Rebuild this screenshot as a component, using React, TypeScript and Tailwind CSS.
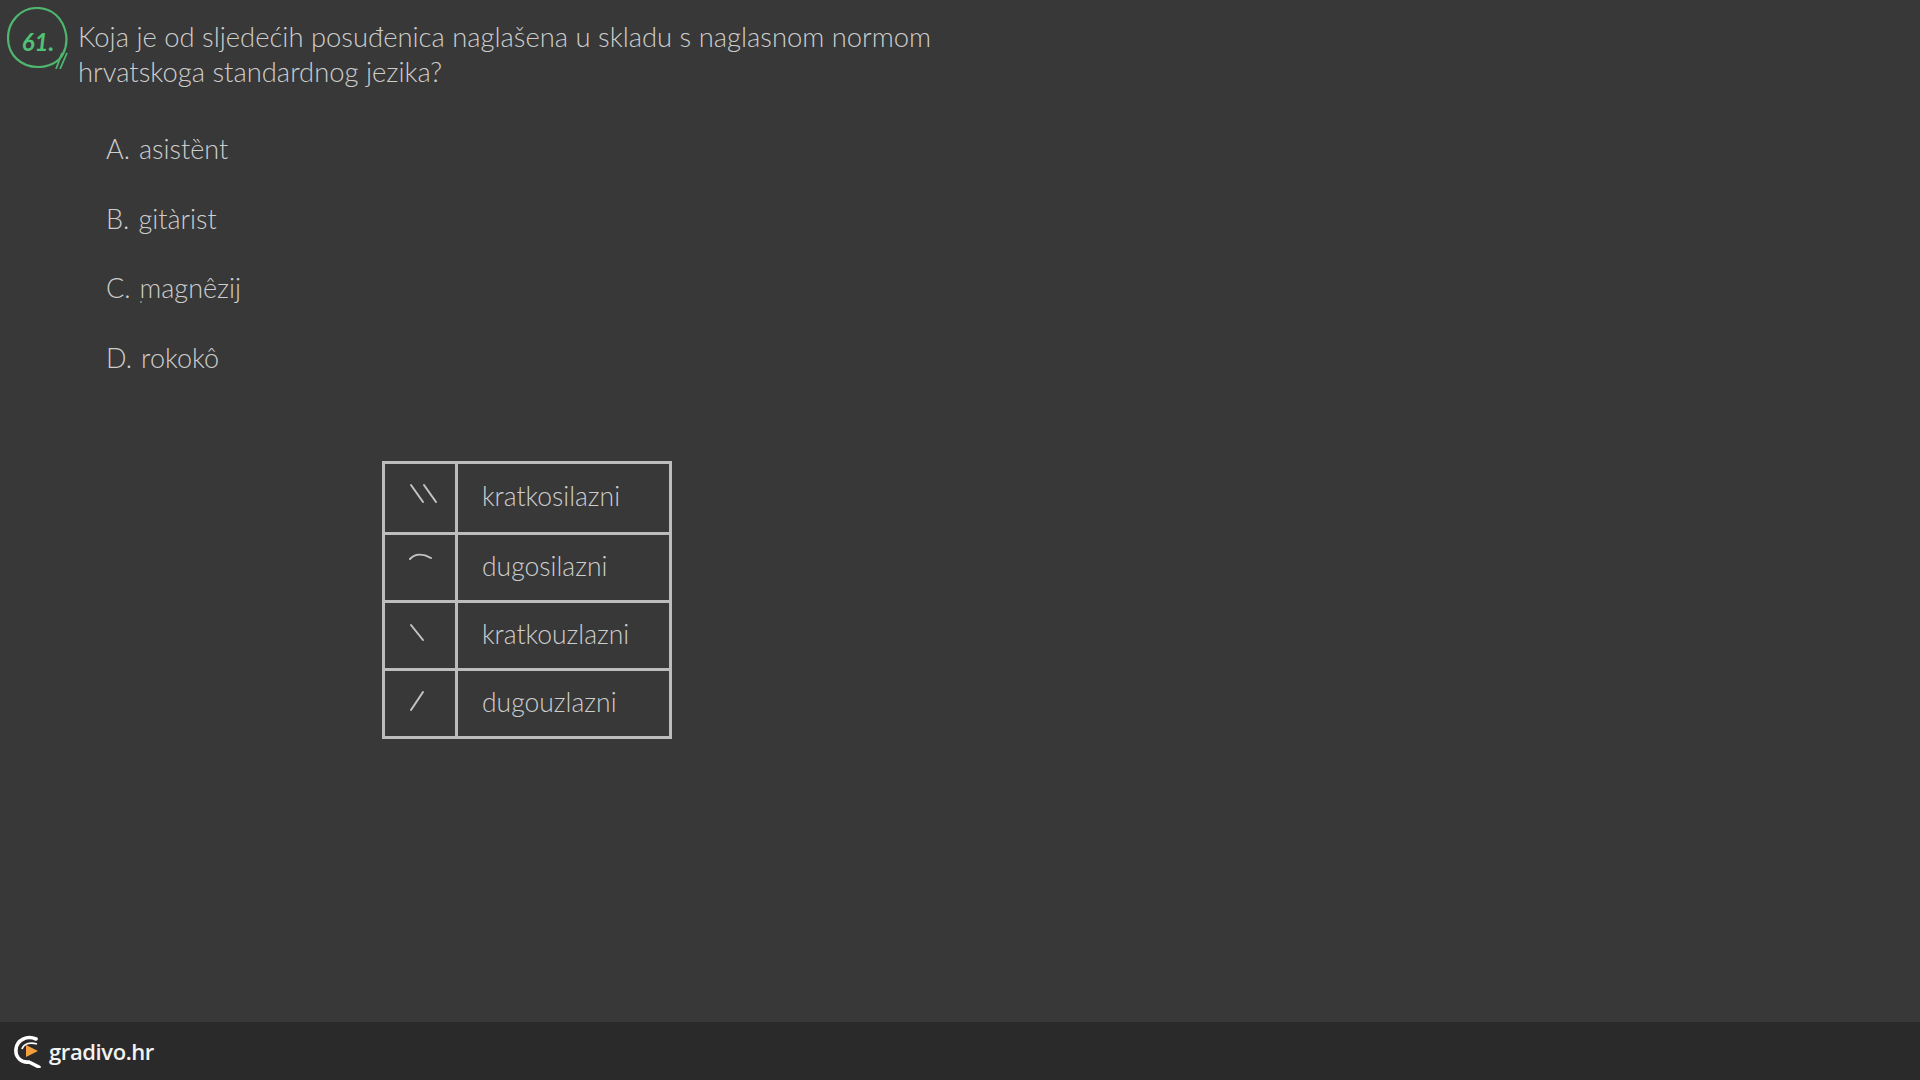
const options = [
  { key: 'A.', word: 'asist\u0205nt' },
  { key: 'B.', word: 'gitàrist' },
  { key: 'C.', word: 'magnêzij', dot: true },
  { key: 'D.', word: 'rokokô' },
];

const accents = [
  { label: 'kratkosilazni', rowClass: 'h-[71px]', mark: <path d="M6 7 L18 24 M19 7 L31 24" /> },
  { label: 'dugosilazni', rowClass: 'h-[68px]', mark: <path d="M5 12 C10 6.5 18 6.5 26 11" /> },
  { label: 'kratkouzlazni', rowClass: 'h-[68px]', mark: <path d="M6 10 L18 25" /> },
  { label: 'dugouzlazni', rowClass: 'h-[68px]', mark: <path d="M6 27 L18 9" /> },
];

export default function App() {
  return (
    <div className="flex h-screen flex-col overflow-hidden bg-[#383838] font-['Lato',sans-serif] text-[#cdcdcd]">
      <main className="flex-1">
        {/* question */}
        <div className="flex items-start pl-[7px] pt-[7px]">
          <div className="relative flex h-[62px] w-[62px] items-center justify-center">
            <svg viewBox="0 0 62 62" className="absolute inset-0 h-full w-full" fill="none" stroke="#4fb56f" strokeWidth="2.2">
              <path d="M59 27 C56 11 45 1 30 1 C14 1 1 14 1 31 C1 48 14 60 31 60 C42 60 52 55 56 47 C60 39 60 33 59 27 Z" />
              <path d="M49 62 L55 46 M53 62 L60 46" strokeWidth="1.8" />
            </svg>
            <span className="relative pt-2 text-[24px] font-bold italic leading-none text-[#4fc275]">61.</span>
          </div>
          <p className="ml-[9px] mt-[12px] w-[870px] text-[27.4px] font-light leading-[35px]">
            Koja je od sljedećih posuđenica naglašena u skladu s naglasnom normom hrvatskoga standardnog jezika?
          </p>
        </div>

        {/* answers */}
        <ul className="ml-[106px] mt-[42px] flex flex-col gap-[33.5px] text-[27px] font-light leading-[36px]">
          {options.map((o) => (
            <li key={o.key} className="flex gap-[9px]">
              <span>{o.key}</span>
              <span className="relative">
                {o.word}
                {o.dot && <span className="absolute left-0 top-[31px] h-[2px] w-[2px] rounded-full bg-[#6f9a86]" />}
              </span>
            </li>
          ))}
        </ul>

        {/* accent table */}
        <table className="ml-[382px] mt-[85px] w-[290px] table-fixed border-collapse border-[3px] border-[#bdbdbd]">
          <tbody>
            {accents.map((a) => (
              <tr key={a.label} className={`${a.rowClass} border-b-[3px] border-[#bdbdbd] last:border-b-0`}>
                <td className="w-[73px] border-r-[3px] border-[#bdbdbd]">
                  <svg viewBox="0 0 50 40" className="ml-[20px] block h-[40px] w-[50px]" fill="none" stroke="#c4c4c4" strokeWidth="2" strokeLinecap="round">
                    {a.mark}
                  </svg>
                </td>
                <td className="pb-[2px] pl-[24px] text-[26.5px] font-light leading-none">{a.label}</td>
              </tr>
            ))}
          </tbody>
        </table>
      </main>

      {/* footer */}
      <footer className="flex h-[58px] items-center gap-[7px] bg-[#2a2a2a] pl-[14px]">
        <svg viewBox="0 0 28 34" className="h-[34px] w-[28px]" fill="none">
          <path d="M22 5 C13 1 3 6 2 15 C1 24 8 29 15 28 L25 33" stroke="#fff" strokeWidth="3.6" strokeLinecap="round" strokeLinejoin="round" />
          <path d="M23 10 C17 8 10 9 8 15" stroke="#fff" strokeWidth="1.8" />
          <path d="M12 11 L24 17 L12 23 Z" fill="#f2a03d" />
        </svg>
        <span className="font-['Open_Sans',sans-serif] text-[22px] font-semibold leading-none tracking-[-0.4px] text-[#f2f2f2]">gradivo.hr</span>
      </footer>
    </div>
  );
}
